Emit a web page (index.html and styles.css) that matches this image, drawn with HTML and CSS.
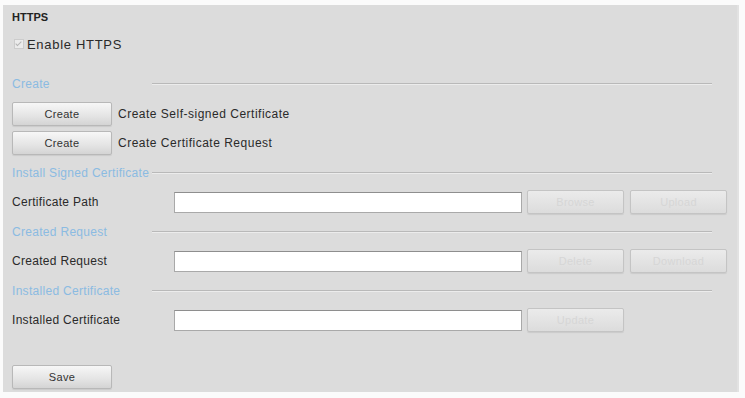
FILE: index.html
```html
<!DOCTYPE html>
<html lang="en">

<head>
    <meta charset="UTF-8">
    <title>HTTPS</title>
    <link rel="stylesheet" href="styles.css">
</head>

<body>
    <div class="panel">
        <div class="title">HTTPS</div>

        <div class="check-row">
            <span class="checkbox"></span>
            <span>Enable HTTPS</span>
        </div>

        <div class="section first">
            <span class="section-name">Create</span>
            <span class="section-line"></span>
        </div>
        <div class="btn-row">
            <button class="btn">Create</button>
            <span class="btn-text">Create Self-signed Certificate</span>
        </div>
        <div class="btn-row second">
            <button class="btn">Create</button>
            <span class="btn-text">Create Certificate Request</span>
        </div>

        <div class="section">
            <span class="section-name">Install Signed Certificate</span>
            <span class="section-line"></span>
        </div>
        <div class="field-row">
            <span class="field-label">Certificate Path</span>
            <input type="text" class="field-input">
            <button class="btn" disabled>Browse</button>
            <button class="btn" disabled>Upload</button>
        </div>

        <div class="section">
            <span class="section-name">Created Request</span>
            <span class="section-line"></span>
        </div>
        <div class="field-row">
            <span class="field-label">Created Request</span>
            <input type="text" class="field-input">
            <button class="btn" disabled>Delete</button>
            <button class="btn" disabled>Download</button>
        </div>

        <div class="section">
            <span class="section-name">Installed Certificate</span>
            <span class="section-line"></span>
        </div>
        <div class="field-row">
            <span class="field-label">Installed Certificate</span>
            <input type="text" class="field-input">
            <button class="btn" disabled>Update</button>
        </div>

        <div class="btn-row save-row">
            <button class="btn">Save</button>
        </div>
    </div>
</body>

</html>
```

FILE: styles.css
```css
body {
    margin: 0;
    background: #fbfbfb;
    font-family: "Liberation Sans", Arial, sans-serif;
    font-size: 12px;
    color: #2a2a2a;
}

.panel {
    margin: 5px 6px 0 3px;
    height: 387px;
    padding-left: 9px;
    background: #dcdcdc;
    border-right: 2px solid #e2e2e2;
    box-sizing: border-box;
}

.title {
    height: 24px;
    line-height: 24px;
    font-size: 11px;
    font-weight: bold;
    color: #222;
}

.check-row {
    height: 30px;
    display: flex;
    align-items: center;
    font-size: 13px;
    letter-spacing: 0.7px;
}

.checkbox {
    position: relative;
    flex-shrink: 0;
    width: 8px;
    height: 8px;
    margin: 0 3px 0 2px;
    background: #ebebeb;
    border: 1px solid #cccccc;
}

.checkbox::after {
    content: "";
    position: absolute;
    left: 2px;
    top: 0;
    width: 2px;
    height: 5px;
    border: solid #b5b5b5;
    border-width: 0 1px 1px 0;
    transform: rotate(45deg);
}

.section {
    height: 20px;
    margin-top: 8px;
    display: flex;
    align-items: center;
}

.section.first {
    margin-top: 15px;
}

.section-name {
    width: 140px;
    color: #8bbbe2;
    font-size: 12px;
    letter-spacing: 0.3px;
    white-space: nowrap;
}

.section-line {
    flex: 0 0 560px;
    border-top: 1px solid #b9b9b9;
    border-bottom: 1px solid #ececec;
}

.btn-row {
    height: 24px;
    margin-top: 8px;
    display: flex;
    align-items: center;
}

.btn-row.second {
    margin-top: 5px;
}

.btn-row.save-row {
    margin-top: 33px;
}

.btn-text {
    margin-left: 6px;
    font-size: 12px;
    letter-spacing: 0.5px;
}

.btn {
    width: 100px;
    height: 24px;
    padding: 0;
    font-family: inherit;
    font-size: 11px;
    letter-spacing: 0.3px;
    color: #333;
    background: linear-gradient(#f7f7f7, #e4e4e4 60%, #d4d4d4);
    border: 1px solid #b8b8b8;
    border-radius: 2px;
    box-shadow: 0 1px 1px rgba(0, 0, 0, 0.08);
}

.btn:disabled {
    color: #d6d6d6;
    background: linear-gradient(#ebebeb, #dcdcdc);
    border-color: #c4c4c4;
}

.field-row {
    height: 24px;
    margin-top: 7px;
    display: flex;
    align-items: center;
    gap: 6px;
}

.field-label {
    width: 156px;
    font-size: 12px;
    letter-spacing: 0.3px;
}

.field-input {
    width: 348px;
    height: 21px;
    margin: 0 -1px 0 0;
    padding: 0;
    background: #fff;
    border: 1px solid #a9a9a9;
    border-top-color: #8e8e8e;
    box-sizing: border-box;
}

.field-row .btn {
    width: 97px;
}
```
